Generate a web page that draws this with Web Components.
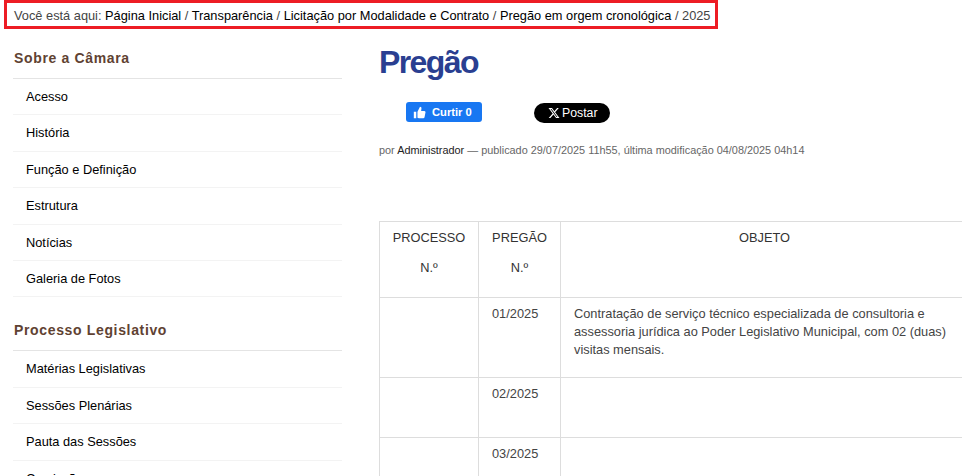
<!DOCTYPE html>
<html lang="pt-BR">
<head>
<meta charset="utf-8">
<title>Pregão</title>
<style>
  html, body { margin: 0; height: 476px; overflow: hidden; background: #fff; }
  body { font-family: "Liberation Sans", Arial, sans-serif; font-size: 12.8px; color: #444; }
</style>
</head>
<body>
<app-breadcrumb>
  <a>Página Inicial</a> / <a>Transparência</a> / <a>Licitação por Modalidade e Contrato</a> / <a>Pregão em orgem cronológica</a> / 2025
</app-breadcrumb>
<app-layout>
  <div slot="side">
    <side-menu title="Sobre a Câmara" items="Acesso|História|Função e Definição|Estrutura|Notícias|Galeria de Fotos"></side-menu>
    <side-menu title="Processo Legislativo" items="Matérias Legislativas|Sessões Plenárias|Pauta das Sessões|Comissões"></side-menu>
  </div>
  <page-title>Pregão</page-title>
  <social-bar></social-bar>
  <doc-byline></doc-byline>
  <bid-table></bid-table>
</app-layout>

<script>
customElements.define('app-breadcrumb',
  class extends HTMLElement {
    constructor () {
      super()
      this.attachShadow({ mode: 'open' }).innerHTML = `
        <style>
          :host {
            display: block;
            box-sizing: border-box;
            width: 714px;
            height: 29px;
            margin-left: 4px;
            padding: 5px 7px 0;
            border: 3px solid #ed1c24;
            font-size: 12.8px;
            line-height: 15px;
            color: #444;
            white-space: nowrap;
          }
          ::slotted(a) { color: #000; }
        </style>
        Você está aqui: <slot></slot>`
    }
  })

customElements.define('app-layout',
  class extends HTMLElement {
    constructor () {
      super()
      this.attachShadow({ mode: 'open' }).innerHTML = `
        <style>
          :host {
            display: flex;
            gap: 37px;
            padding-left: 13px;
          }
          #side { flex: 0 0 329px; }
          #main { flex: 0 0 600px; min-width: 0; }
        </style>
        <div id="side"><slot name="side"></slot></div>
        <div id="main"><slot></slot></div>`
    }
  })

customElements.define('side-menu',
  class extends HTMLElement {
    constructor () {
      super()
      const items = (this.getAttribute('items') || '').split('|')
      this.attachShadow({ mode: 'open' }).innerHTML = `
        <style>
          :host { display: block; margin-bottom: 4px; }
          h2 {
            margin: 0;
            padding: 20px 0 11px 1px;
            font-size: 14px;
            line-height: 18px;
            font-weight: bold;
            letter-spacing: 0.65px;
            color: #5f4232;
            border-bottom: 1px solid #e4e4e4;
          }
          ul { margin: 0; padding: 0; list-style: none; }
          li {
            box-sizing: border-box;
            height: 36.4px;
            padding: 0 0 0 13px;
            line-height: 35px;
            font-size: 12.8px;
            color: #000;
            border-bottom: 1px solid #f3f3f3;
          }
        </style>
        <h2>${this.getAttribute('title')}</h2>
        <ul>${items.map(item => `<li>${item}</li>`).join('')}</ul>`
    }
  })

customElements.define('page-title',
  class extends HTMLElement {
    constructor () {
      super()
      this.attachShadow({ mode: 'open' }).innerHTML = `
        <style>
          :host {
            display: block;
            padding-top: 12px;
            font-size: 32px;
            line-height: 42px;
            font-weight: bold;
            letter-spacing: -1.6px;
            color: #2a3f91;
          }
        </style>
        <slot></slot>`
    }
  })

customElements.define('social-bar',
  class extends HTMLElement {
    constructor () {
      super()
      this.attachShadow({ mode: 'open' }).innerHTML = `
        <style>
          :host {
            display: flex;
            align-items: flex-start;
            gap: 52px;
            padding: 19px 0 0 27px;
            height: 21px;
          }
          .like, .post {
            display: flex;
            align-items: center;
            box-sizing: border-box;
            width: 76px;
            height: 20px;
            color: #fff;
          }
          .like {
            gap: 6px;
            padding-left: 7px;
            border-radius: 3px;
            background: #1877f2;
            font-size: 11.2px;
            font-weight: bold;
          }
          .post {
            gap: 2px;
            margin-top: 1px;
            padding-left: 14px;
            border-radius: 10px;
            background: #000;
            font-size: 12.3px;
          }
        </style>
        <div class="like">
          <svg width="13" height="13" viewBox="0 0 16 16" fill="#fff">
            <path d="M1 7h3v8H1zM5.5 14.5V7.2L8.6 1c1.4 0 2 1 1.8 2.2L10 6h4c1 0 1.6.9 1.4 1.8l-1.2 6c-.2.8-.8 1.2-1.6 1.2H7.2c-.7 0-1.2-.2-1.7-.5z"/>
          </svg>
          <span>Curtir 0</span>
        </div>
        <div class="post">
          <svg width="12" height="12" viewBox="0 0 24 24" fill="#fff">
            <path d="M18.2 2h3.4l-7.4 8.5L23 22h-6.8l-5.3-7-6.1 7H1.4l7.9-9.1L1 2h7l4.8 6.4zm-1.2 18h1.9L7 3.9H5z"/>
          </svg>
          <span>Postar</span>
        </div>`
    }
  })

customElements.define('doc-byline',
  class extends HTMLElement {
    constructor () {
      super()
      this.attachShadow({ mode: 'open' }).innerHTML = `
        <style>
          :host {
            display: block;
            padding-top: 20px;
            font-size: 10.88px;
            line-height: 14px;
            color: #666;
            white-space: nowrap;
          }
          a { color: #222; }
        </style>
        por <a>Administrador</a> — publicado 29/07/2025 11h55, última modificação 04/08/2025 04h14`
    }
  })

customElements.define('bid-table',
  class extends HTMLElement {
    constructor () {
      super()
      const rows = [
        ['', '01/2025', 'Contratação de serviço técnico especializada de consultoria e assessoria jurídica ao Poder Legislativo Municipal, com 02 (duas) visitas mensais.', 80],
        ['', '02/2025', '', 60],
        ['', '03/2025', '', 60]
      ]
      this.attachShadow({ mode: 'open' }).innerHTML = `
        <style>
          :host {
            display: block;
            margin-top: 64px;
            width: 590px;
          }
          table {
            border-collapse: collapse;
            table-layout: fixed;
            width: 590px;
            font-size: 12.8px;
            line-height: 18px;
            color: #444;
          }
          th, td {
            padding: 7px 13px 6px;
            border: 1px solid #ddd;
            vertical-align: top;
            text-align: left;
          }
          th {
            padding: 1px 0 0;
            font-weight: normal;
            line-height: 30px;
            text-align: center;
            color: #333;
          }
        </style>
        <table>
          <colgroup><col style="width:99px"><col style="width:82px"><col></colgroup>
          <tr style="height:76px">
            <th>PROCESSO<br>N.º</th>
            <th>PREGÃO<br>N.º</th>
            <th>OBJETO</th>
          </tr>
          ${rows.map(row => `
            <tr style="height:${row[3]}px">
              <td>${row[0]}</td>
              <td>${row[1]}</td>
              <td>${row[2]}</td>
            </tr>`).join('')}
        </table>`
    }
  })
</script>
</body>
</html>
